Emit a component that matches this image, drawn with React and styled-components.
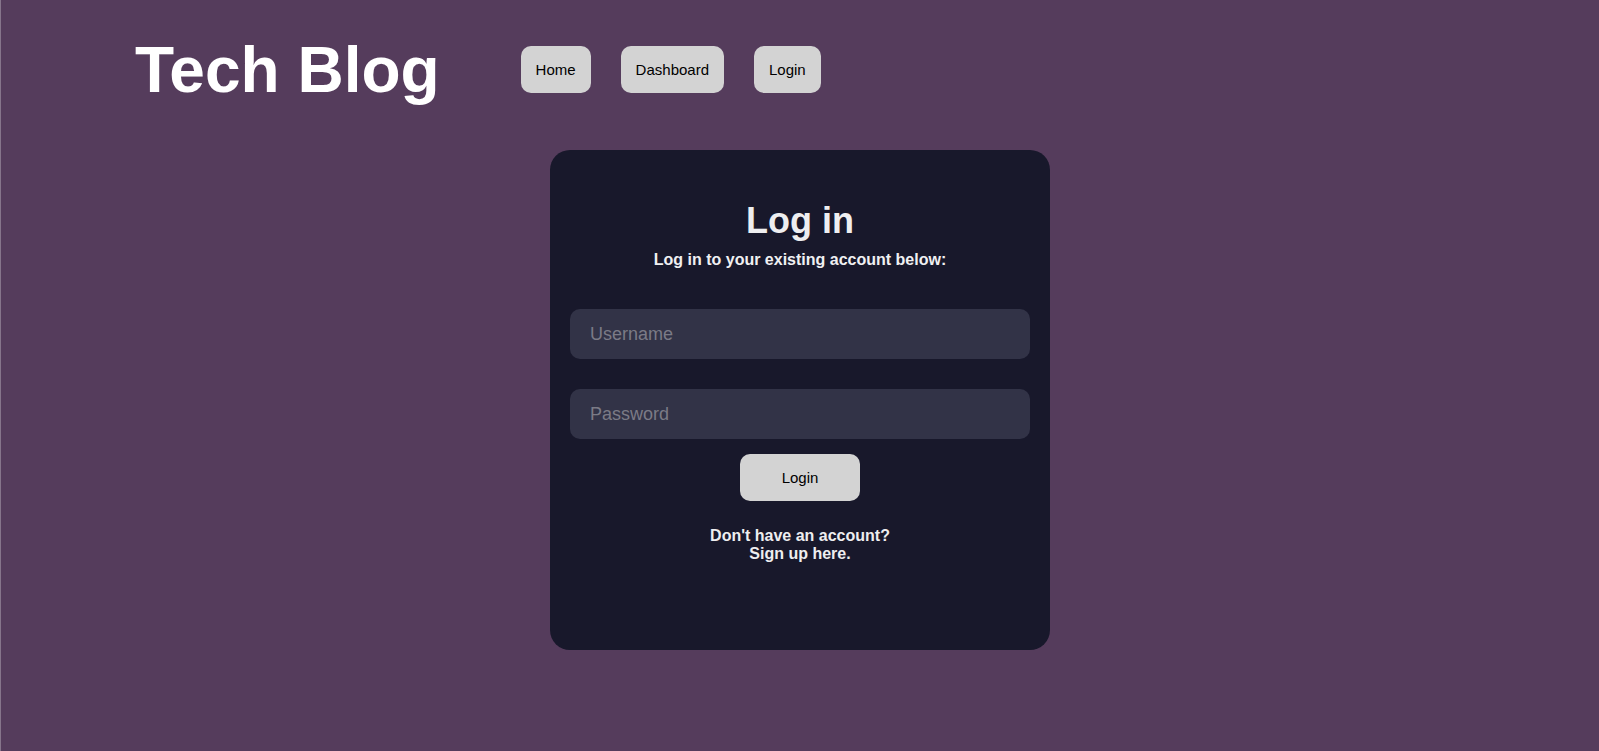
import React from "react";
import styled, { createGlobalStyle } from "styled-components";

const GlobalStyle = createGlobalStyle`
  html, body {
    margin: 0;
    padding: 0;
    background: #553c5c;
  }
  body {
    font-family: "Liberation Sans", Arial, Helvetica, sans-serif;
  }
  * { box-sizing: border-box; }
`;

const Page = styled.div`
  min-height: 751px;
  background: #553c5c;
  border-left: 1px solid #86758b;
`;

const Header = styled.header`
  display: flex;
  align-items: flex-start;
  padding: 38px 0 0 134px;
`;

const Title = styled.h1`
  margin: 0;
  font-size: 64px;
  line-height: 64px;
  font-weight: 700;
  color: #ffffff;
`;

const Nav = styled.nav`
  display: flex;
  gap: 30px;
  margin: 8px 0 0 81px;
`;

const Button = styled.button`
  font-family: "Liberation Sans", Arial, Helvetica, sans-serif;
  font-size: 15px;
  line-height: 17px;
  padding: 15px;
  width: ${(p) => (p.$width ? `${p.$width}px` : "auto")};
  border: none;
  border-radius: 10px;
  background: #d3d3d3;
  color: #000;
  cursor: pointer;
`;

const Main = styled.main`
  display: flex;
  justify-content: center;
  padding-top: 48px;
`;

const Card = styled.section`
  width: 500px;
  height: 500px;
  background: #18182b;
  border-radius: 20px;
  padding: 50px 20px 0;
  display: flex;
  flex-direction: column;
  align-items: center;
`;

const Heading = styled.h2`
  margin: 0;
  font-size: 36px;
  line-height: 42px;
  font-weight: 700;
  color: #eeeef0;
`;

const Subtitle = styled.p`
  margin: 9px 0 0;
  font-size: 16px;
  line-height: 18px;
  font-weight: 700;
  color: #f0f0f2;
`;

const Form = styled.form`
  width: 100%;
  margin-top: 40px;
  display: flex;
  flex-direction: column;
  align-items: center;
`;

const Input = styled.input`
  width: 100%;
  height: 50px;
  border: none;
  outline: none;
  border-radius: 10px;
  background: #323347;
  padding: 0 20px;
  font-family: "Liberation Sans", Arial, Helvetica, sans-serif;
  font-size: 18px;
  color: #eee;
  margin-bottom: ${(p) => p.$gap}px;
  &::placeholder {
    color: #7b7b86;
  }
`;

const Footer = styled.p`
  margin: 26px 0 0;
  text-align: center;
  font-size: 16px;
  line-height: 18px;
  font-weight: 700;
  color: #eeeef0;
`;

export default function App() {
  return (
    <>
      <GlobalStyle />
      <Page>
        <Header>
          <Title>Tech Blog</Title>
          <Nav>
            <Button>Home</Button>
            <Button>Dashboard</Button>
            <Button>Login</Button>
          </Nav>
        </Header>
        <Main>
          <Card>
            <Heading>Log in</Heading>
            <Subtitle>Log in to your existing account below:</Subtitle>
            <Form onSubmit={(e) => e.preventDefault()}>
              <Input type="text" placeholder="Username" $gap={30} />
              <Input type="password" placeholder="Password" $gap={15} />
              <Button type="submit" $width={120}>Login</Button>
            </Form>
            <Footer>
              Don't have an account?
              <br />
              Sign up here.
            </Footer>
          </Card>
        </Main>
      </Page>
    </>
  );
}
